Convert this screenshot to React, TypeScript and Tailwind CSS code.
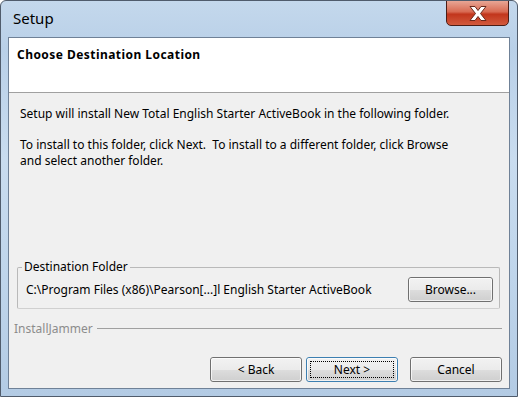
import React from "react";

const font = { fontFamily: '"Segoe UI", "Noto Sans", "Open Sans", sans-serif' };

function WinButton({ label, focused, wide = true }: { label: string; focused?: boolean; wide?: boolean }) {
  return (
    <button
      className={
        "relative h-[25px] rounded-[3px] border text-[12px] text-black " +
        (wide ? "w-[92px] " : "w-[85px] ") +
        (focused ? "border-[#3c7fb1]" : "border-[#707070]")
      }
      style={{ background: "linear-gradient(#f2f2f2 0%, #ebebeb 50%, #dddddd 51%, #cfcfcf 100%)" }}
    >
      <span className="absolute inset-0 rounded-[2px] border border-white/70" />
      {focused && <span className="absolute inset-[3px] border border-dotted border-black" />}
      <span className="relative">{label}</span>
    </button>
  );
}

export default function App() {
  return (
    <div
      className="w-[518px] h-[397px] flex flex-col rounded-t-[6px] border border-[#505c6c] overflow-hidden"
      style={{
        ...font,
        background:
          "linear-gradient(180deg, #c4d8ec 0%, #b9d0e8 12%, #c9dcef 40%, #bfd5eb 70%, #b3cbe4 100%)",
      }}
    >
      {/* title bar */}
      <div className="h-[36px] flex items-start justify-between pl-[12px]">
        <span className="mt-[7px] text-[15px] leading-[20px] text-black">Setup</span>
        <div
          className="w-[63px] h-[26px] mr-[8px] -mt-px rounded-b-[5px] border border-[#4b1d16] flex items-center justify-center"
          style={{ background: "linear-gradient(#e8a695 0%, #d86a52 45%, #c2361c 55%, #d25a3d 100%)" }}
        >
          <svg width="22" height="17" viewBox="0 0 22 17">
            <path
              d="M3 1.5 L8 1.5 L11 5.5 L14 1.5 L19 1.5 L13.5 8.5 L19 15.5 L14 15.5 L11 11.5 L8 15.5 L3 15.5 L8.5 8.5 Z"
              fill="#ffffff"
              stroke="#6a2a1c"
              strokeWidth="1"
              strokeLinejoin="round"
            />
          </svg>
        </div>
      </div>

      {/* client area */}
      <div className="mx-[7px] mb-[7px] flex-1 flex flex-col border border-[#6f8197] bg-[#f0f0f0] text-[12px] text-black">
        <div className="h-[55px] bg-white border-b border-[#a0a0a0] pl-[8px] pt-[9px]">
          <div className="font-bold leading-[16px] tracking-[0.45px]">Choose Destination Location</div>
        </div>

        <div className="flex-1 flex flex-col px-[7px]">
          <div className="pl-[4px] pt-[13px] leading-[16px]">
            <p>Setup will install New Total English Starter ActiveBook in the following folder.</p>
            <p className="mt-[15px]">
              To install to this folder, click Next.&nbsp; To install to a different folder, click Browse
              <br />
              and select another folder.
            </p>
          </div>

          <fieldset className="mt-auto ml-[1px] mr-[2px] border border-[#b9b9b9] border-b-[#d0d0d0] rounded-[2px] pl-[4px] pr-[6px] pb-[6px]">
            <legend className="px-[2px] leading-[16px]">Destination Folder</legend>
            <div className="flex items-center justify-between mt-[2px]">
              <span className="pl-[4px]">C:\Program Files (x86)\Pearson[...]l English Starter ActiveBook</span>
              <WinButton label="Browse..." wide={false} />
            </div>
          </fieldset>

          <div className="flex items-center gap-[4px] mt-[12px]">
            <span className="text-[#8c8c8c] leading-[16px] -ml-[2px]">InstallJammer</span>
            <div className="flex-1 h-[2px] border-t border-[#a0a0a0] border-b-white" />
          </div>

          <div className="flex justify-end mt-[20px] mb-[6px] gap-[4px]">
            <WinButton label="< Back" />
            <WinButton label="Next >" focused />
            <div className="w-[4px]" />
            <WinButton label="Cancel" />
          </div>
        </div>
      </div>
    </div>
  );
}
